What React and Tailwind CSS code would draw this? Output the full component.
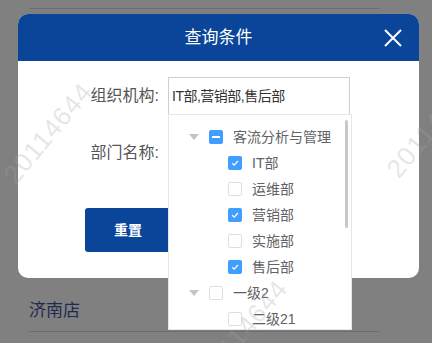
import React from 'react';

const Checkbox = ({ state }) => {
  if (state === 'checked') {
    return (
      <span className="w-[14px] h-[14px] rounded-[2px] bg-[#409eff] flex items-center justify-center shrink-0">
        <svg width="10" height="10" viewBox="0 0 10 10">
          <path d="M2.2 5.2 L4.2 7.1 L7.9 3" fill="none" stroke="#fff" strokeWidth="1.2" />
        </svg>
      </span>
    );
  }
  if (state === 'half') {
    return (
      <span className="w-[14px] h-[14px] rounded-[2px] bg-[#409eff] flex items-center justify-center shrink-0">
        <span className="w-[8px] h-[2px] bg-white" />
      </span>
    );
  }
  return <span className="block w-[14px] h-[14px] rounded-[2px] border border-[#dcdfe6] bg-white shrink-0" />;
};

const Caret = () => (
  <svg width="10" height="7" viewBox="0 0 10 7" className="shrink-0">
    <path d="M0 0 H10 L5 6 Z" fill="#c0c4cc" />
  </svg>
);

const nodes = [
  { label: '客流分析与管理', level: 0, state: 'half' },
  { label: 'IT部', level: 1, state: 'checked' },
  { label: '运维部', level: 1, state: 'none' },
  { label: '营销部', level: 1, state: 'checked' },
  { label: '实施部', level: 1, state: 'none' },
  { label: '售后部', level: 1, state: 'checked' },
  { label: '一级2', level: 0, state: 'none' },
  { label: '二级21', level: 1, state: 'none' },
];

const Watermark = ({ className }) => (
  <div
    className={`absolute text-[26px] tracking-[1px] leading-none text-[rgba(164,164,164,0.28)] -rotate-[50deg] pointer-events-none ${className}`}
  >
    20114644
  </div>
);

export default function App() {
  return (
    <div className="relative w-[432px] h-[343px] overflow-hidden bg-[#808080] font-['Liberation_Sans','Noto_Sans_CJK_SC',sans-serif]">
      {/* 背景页面 */}
      <div className="flex flex-col h-full px-[29px] w-[408px]">
        <div className="h-[9px] border-b border-[#6e6e6e]" />
        <div className="flex-1" />
        <div className="h-[41px] flex items-center border-b border-[#6e6e6e] text-[17px] text-[#1f2a50]">
          济南店
        </div>
        <div className="h-[11px]" />
      </div>

      {/* 弹窗 */}
      <div className="absolute left-[18px] top-[14px] w-[401px] h-[264px] rounded-[10px] bg-white overflow-hidden flex flex-col">
        <div className="relative h-[47px] bg-[#0a4599] flex items-center justify-center text-white text-[17px]">
          查询条件
          <svg width="20" height="20" viewBox="0 0 20 20" className="absolute right-[16px] top-[14px]">
            <path d="M2 2 L18 18 M18 2 L2 18" stroke="#fff" strokeWidth="2" />
          </svg>
        </div>
        <div className="pt-[16px] flex flex-col">
          <div className="flex items-center">
            <div className="w-[150px] pr-[9px] text-right text-[16px] text-[#555]">组织机构:</div>
            <div className="w-[182px] h-[38px] border border-[#cfcfcf] flex items-center pl-[3px] text-[14px] tracking-[-0.5px] text-[#333]">
              IT部,营销部,售后部
            </div>
          </div>
          <div className="flex items-center mt-[19px]">
            <div className="w-[150px] pr-[9px] text-right text-[16px] text-[#555]">部门名称:</div>
            <div className="w-[182px] h-[38px] border border-[#dcdfe6]" />
          </div>
          <div className="flex mt-[36px] pl-[67px] gap-[12px]">
            <button className="w-[86px] h-[44px] rounded-[3px] bg-[#0a4599] text-white text-[14px] font-bold">
              重置
            </button>
            <button className="w-[86px] h-[44px] rounded-[3px] bg-[#0a4599] text-white text-[14px] font-bold">
              查询
            </button>
          </div>
        </div>
      </div>

      {/* 下拉树 */}
      <div className="absolute left-[168px] top-[114px] w-[184px] h-[216px] bg-white border border-[#e4e7ed] pt-[9px] overflow-hidden">
        {nodes.map((n, i) => (
          <div key={i} className="h-[26px] flex items-center text-[14px] text-[#606266]">
            {n.level === 0 ? (
              <div className="flex items-center pl-[20px]">
                <Caret />
                <span className="ml-[10px] flex"><Checkbox state={n.state} /></span>
                <span className="ml-[10px]">{n.label}</span>
              </div>
            ) : (
              <div className="flex items-center pl-[59px]">
                <Checkbox state={n.state} />
                <span className="ml-[10px]">{n.label}</span>
              </div>
            )}
          </div>
        ))}
        <div className="absolute left-[176px] top-[5px] w-[3px] h-[108px] rounded-full bg-[#c8c8c8]" />
      </div>

      <Watermark className="left-[-13px] top-[120px]" />
      <Watermark className="left-[370px] top-[114px]" />
      <Watermark className="left-[182px] top-[317px]" />
    </div>
  );
}
